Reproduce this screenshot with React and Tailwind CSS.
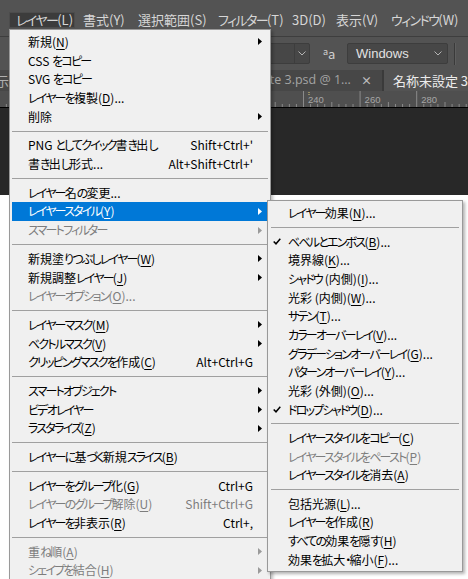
import React from 'react';

const FONT = "font-['Noto_Sans_CJK_JP',sans-serif]";

const mainItems = [
  { l: '新規(&N)', sub: true },
  { l: 'CSS をコピー' },
  { l: 'SVG をコピー' },
  { l: 'レイヤーを複製(&D)...' },
  { l: '削除', sub: true },
  'sep',
  { l: 'PNG としてクイック書き出し', k: "Shift+Ctrl+'" },
  { l: '書き出し形式...', k: "Alt+Shift+Ctrl+'" },
  'sep',
  { l: 'レイヤー名の変更...' },
  { l: 'レイヤースタイル(&Y)', sub: true, active: true },
  { l: 'スマートフィルター', sub: true, dis: true },
  'sep',
  { l: '新規塗りつぶしレイヤー(&W)', sub: true },
  { l: '新規調整レイヤー(&J)', sub: true },
  { l: 'レイヤーオプション(&O)...', dis: true },
  'sep',
  { l: 'レイヤーマスク(&M)', sub: true },
  { l: 'ベクトルマスク(&V)', sub: true },
  { l: 'クリッピングマスクを作成(&C)', k: 'Alt+Ctrl+G' },
  'sep',
  { l: 'スマートオブジェクト', sub: true },
  { l: 'ビデオレイヤー', sub: true },
  { l: 'ラスタライズ(&Z)', sub: true },
  'sep',
  { l: 'レイヤーに基づく新規スライス(&B)' },
  'sep',
  { l: 'レイヤーをグループ化(&G)', k: 'Ctrl+G' },
  { l: 'レイヤーのグループ解除(&U)', k: 'Shift+Ctrl+G', dis: true },
  { l: 'レイヤーを非表示(&R)', k: 'Ctrl+,' },
  'sep',
  { l: '重ね順(&A)', sub: true, dis: true },
  { l: 'シェイプを結合(&H)', sub: true, dis: true },
  { l: '整列(&I)', sub: true },
];

const styleItems = [
  { l: 'レイヤー効果(&N)...' },
  'sep',
  { l: 'ベベルとエンボス(&B)...', chk: true },
  { l: '境界線(&K)...' },
  { l: 'シャドウ (内側)(&I)...' },
  { l: '光彩 (内側)(&W)...' },
  { l: 'サテン(&T)...' },
  { l: 'カラーオーバーレイ(&V)...' },
  { l: 'グラデーションオーバーレイ(&G)...' },
  { l: 'パターンオーバーレイ(&Y)...' },
  { l: '光彩 (外側)(&O)...' },
  { l: 'ドロップシャドウ(&D)...', chk: true },
  'sep',
  { l: 'レイヤースタイルをコピー(&C)' },
  { l: 'レイヤースタイルをペースト(&P)', dis: true },
  { l: 'レイヤースタイルを消去(&A)' },
  'sep',
  { l: '包括光源(&L)...' },
  { l: 'レイヤーを作成(&R)' },
  { l: 'すべての効果を隠す(&H)' },
  { l: '効果を拡大・縮小(&F)...' },
];

const menuBar = [
  { t: 'レイヤー(L)', w: 'w-[66px]', pl: 'pl-[6px]', active: true },
  { t: '書式(Y)', w: 'w-[56px]', pl: 'pl-[8px]' },
  { t: '選択範囲(S)', w: 'w-[80px]', pl: 'pl-[7px]' },
  { t: 'フィルター(T)', w: 'w-[74px]', pl: 'pl-[7px]' },
  { t: '3D(D)', w: 'w-[44px]', pl: 'pl-[7px]' },
  { t: '表示(V)', w: 'w-[55px]', pl: 'pl-[7px]' },
  { t: 'ウィンドウ(W)', w: 'w-[78px]', pl: 'pl-[7px]' },
];

// kana in the Meiryo UI menus run narrower than Noto's full-width kana
const KANA = /([\u3041-\u309F\u30A0-\u30FF]+)/;

function Jp({ text, kana = "[font-feature-settings:'palt'] tracking-[-1.8px]" }) {
  return text.split(KANA).map((part, i) =>
    KANA.test(part) ? (
      <span key={i} className={kana}>
        {part}
      </span>
    ) : (
      part
    )
  );
}

function Label({ text }) {
  const i = text.indexOf('&');
  if (i < 0) return <Jp text={text} />;
  return (
    <>
      <Jp text={text.slice(0, i)} />
      <span className="underline decoration-1 underline-offset-[2px]">{text[i + 1]}</span>
      <Jp text={text.slice(i + 2)} />
    </>
  );
}

const Arrow = ({ color }) => (
  <svg width="4" height="7" viewBox="0 0 4 7">
    <path d="M0 0L4 3.5L0 7Z" fill={color} />
  </svg>
);

const Check = () => (
  <svg width="8" height="7" viewBox="0 0 8 7">
    <path d="M0.7 3.4L3 5.8L7.3 0.8" fill="none" stroke="#000" strokeWidth="1.5" />
  </svg>
);

const Chevron = () => (
  <svg width="8" height="5" viewBox="0 0 8 5">
    <path d="M0.5 0.5L4 4L7.5 0.5" fill="none" stroke="#b4b4b4" strokeWidth="1" />
  </svg>
);

function MainMenu() {
  return (
    <div className="absolute left-[9px] top-[29px] w-[262px] bg-[#f0f0f0] border border-[#999999] px-[2px] pt-[2.6px] pb-[3px] shadow-[2px_2px_3px_rgba(0,0,0,0.25)]">
      {mainItems.map((it, idx) => {
        if (it === 'sep')
          return (
            <div key={idx} className="h-[10px] flex items-center">
              <div className="h-px w-full bg-[#a0a0a0]" />
            </div>
          );
        const color = it.active ? 'text-white' : it.dis ? 'text-[#7d7d7d]' : 'text-black';
        return (
          <div
            key={idx}
            className={`h-[18.7px] flex items-center pl-[16px] text-[12px] leading-none whitespace-nowrap ${color} ${it.active ? 'bg-[#0078d7]' : ''}`}
          >
            <span className="flex-1">
              <Label text={it.l} />
            </span>
            {it.k && <span>{it.k}</span>}
            <span className="w-[15px] h-full flex items-center pl-[5px]">
              {it.sub && <Arrow color={it.active ? '#ffffff' : it.dis ? '#9a9a9a' : '#000000'} />}
            </span>
          </div>
        );
      })}
    </div>
  );
}

function StyleMenu() {
  return (
    <div className="absolute left-[267px] top-[200px] w-[196px] bg-[#f0f0f0] border border-[#999999] px-[2px] pt-[3px] pb-[1.4px] shadow-[2px_2px_3px_rgba(0,0,0,0.3)]">
      {styleItems.map((it, idx) => {
        if (it === 'sep')
          return (
            <div key={idx} className="h-[9.6px] flex items-center pl-[1px] pr-[1px]">
              <div className="h-px w-full bg-[#a0a0a0]" />
            </div>
          );
        return (
          <div
            key={idx}
            className={`h-[18.7px] flex items-center text-[12px] leading-none whitespace-nowrap ${it.dis ? 'text-[#7d7d7d]' : 'text-black'}`}
          >
            <span className="w-[18px] flex items-center pl-[3px]">{it.chk && <Check />}</span>
            <span>
              <Label text={it.l} />
            </span>
          </div>
        );
      })}
    </div>
  );
}

function Ruler() {
  const ticks = [];
  for (let i = -64; i <= 10; i++) {
    const x = 416.7 + i * 7.075;
    if (i % 8 === 0) {
      ticks.push(<line key={'l' + i} x1={x} y1={0} x2={x} y2={16} stroke="#8a8a8a" strokeWidth="1" />);
      ticks.push(
        <text key={'t' + i} x={x + 4.5} y={12} fontSize="9.5" fill="#a6a6a6" fontFamily="Liberation Sans, sans-serif">
          {280 + i * 2.5}
        </text>
      );
    } else if (i % 4 === 0) {
      ticks.push(<line key={'l' + i} x1={x} y1={11} x2={x} y2={16} stroke="#8a8a8a" strokeWidth="1" />);
    } else {
      ticks.push(<line key={'l' + i} x1={x} y1={13} x2={x} y2={16} stroke="#8a8a8a" strokeWidth="1" />);
    }
  }
  return (
    <svg width="468" height="16" className="block">
      {ticks}
      <line x1="309" y1="1" x2="309" y2="5" stroke="#d8c878" strokeWidth="1" strokeDasharray="1 1" />
    </svg>
  );
}

export default function App() {
  return (
    <div className={`relative w-[468px] h-[579px] overflow-hidden bg-white ${FONT}`}>
      <div className="flex flex-col h-full">
        {/* menu bar */}
        <div className="h-[36px] bg-[#535353] flex items-start pt-[12px] pl-[9px] text-[13px] text-[#d6d6d6]">
          {menuBar.map((m) => (
            <div
              key={m.t}
              className={`${m.w} ${m.pl} h-[16px] flex items-center whitespace-nowrap ${m.active ? 'bg-[#3c3c3c] border border-[#4c4c4c]' : ''}`}
            >
              <span>
                <Jp text={m.t} kana="[font-feature-settings:'palt'] tracking-[-1.6px]" />
              </span>
            </div>
          ))}
        </div>
        <div className="h-px bg-[#3e3e3e]" />
        {/* options bar */}
        <div className="h-[33px] bg-[#535353] flex items-center pl-[200px]">
          <div className="w-[110px] h-[21px] bg-[#474747] border border-[#3d3d3d] rounded-[2px] flex justify-end">
            <div className="w-[15px] h-full border-l border-[#3d3d3d] flex items-center justify-center">
              <Chevron />
            </div>
          </div>
          <div className="ml-[13px] w-[14px] flex items-end text-[#cfcfcf] leading-none">
            <span className="text-[9px] self-start">a</span>
            <span className="text-[13px]">a</span>
          </div>
          <div className="ml-[10px] w-[101px] h-[21px] bg-[#474747] border border-[#3d3d3d] rounded-[2px] flex items-center pl-[8px] pr-[5px] text-[13px] text-[#e2e2e2] font-['Liberation_Sans',sans-serif]">
            <span className="flex-1">Windows</span>
            <Chevron />
          </div>
          <div className="ml-[6px] w-px h-[22px] bg-[#3a3a3a]" />
          <div className="w-px h-[22px] bg-[#5e5e5e]" />
        </div>
        {/* tabs */}
        <div className="h-[21px] bg-[#3f3f3f] flex">
          <div className="w-[12px] bg-[#474747] overflow-hidden flex items-center text-[13px] text-[#b0b0b0] whitespace-nowrap">
            <span className="-ml-[4px]">示</span>
          </div>
          <div className="w-[374px] bg-[#474747] flex items-center justify-end pr-[10px] text-[13px] text-[#a4a4a4] whitespace-nowrap overflow-hidden border-l border-[#3a3a3a]">
            <span className="font-['Open_Sans',sans-serif] text-[12.5px]">Chapte 3.psd @ 1...</span>
            <span className="ml-[10px] text-[11px] font-bold text-[#bdbdbd]">×</span>
          </div>
          <div className="w-[2px] bg-[#3a3a3a]" />
          <div className="flex-1 bg-[#535353] flex items-center pl-[9px] text-[13px] text-[#ececec] whitespace-nowrap">
            名称未設定 3
          </div>
        </div>
        {/* ruler */}
        <div className="h-[16px] bg-[#4f4f4f]">
          <Ruler />
        </div>
        <div className="h-px bg-black" />
        {/* canvas */}
        <div className="h-[87px] bg-[#282828]" />
        <div className="flex-1 bg-white" />
      </div>
      <MainMenu />
      <StyleMenu />
    </div>
  );
}
